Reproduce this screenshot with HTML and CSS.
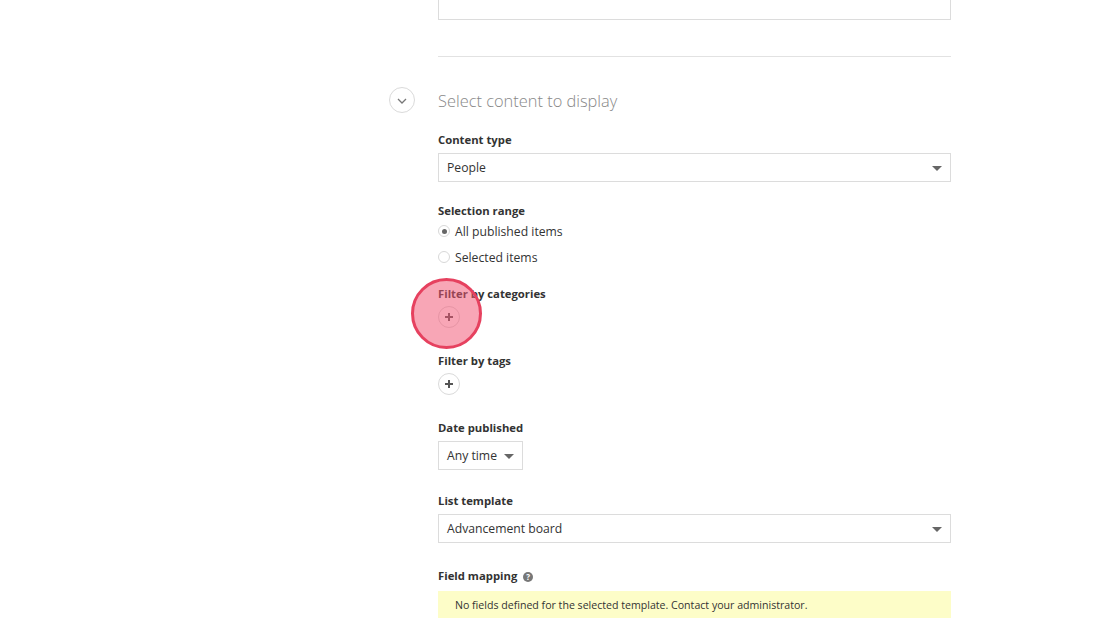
FILE: index.html
```html
<!DOCTYPE html>
<html lang="en">
<head>
<meta charset="utf-8">
<link rel="stylesheet" href="styles.css">
</head>
<body>
<div class="col">
  <div class="box top-box"></div>
  <hr class="divider">
  <div class="section-head">
    <span class="toggle"><svg width="10" height="6" viewBox="0 0 10 6"><path d="M1 1l4 4 4-4" fill="none" stroke="#777" stroke-width="1.3"/></svg></span>
    <h2>Select content to display</h2>
  </div>

  <div class="field first">
    <label class="lbl">Content type</label>
    <div class="box select full"><span>People</span><i class="caret"></i></div>
  </div>

  <div class="field tight">
    <label class="lbl">Selection range</label>
    <div class="radios">
      <div class="radio"><span class="dot on"></span>All published items</div>
      <div class="radio"><span class="dot"></span>Selected items</div>
    </div>
  </div>

  <div class="field after-radio">
    <label class="lbl">Filter by categories</label>
    <div class="plus-wrap">
      <span class="plus"><svg width="10" height="10" viewBox="0 0 10 10"><path d="M5 1v8M1 5h8" stroke="#555" stroke-width="2"/></svg></span>
      <span class="highlight"></span>
    </div>
  </div>

  <div class="field after-plus">
    <label class="lbl">Filter by tags</label>
    <div class="plus-wrap"><span class="plus"><svg width="10" height="10" viewBox="0 0 10 10"><path d="M5 1v8M1 5h8" stroke="#555" stroke-width="2"/></svg></span></div>
  </div>

  <div class="field after-plus">
    <label class="lbl">Date published</label>
    <div class="box select small"><span>Any time</span><i class="caret"></i></div>
  </div>

  <div class="field mid">
    <label class="lbl">List template</label>
    <div class="box select full"><span>Advancement board</span><i class="caret"></i></div>
  </div>

  <div class="field last">
    <label class="lbl">Field mapping <span class="help">?</span></label>
    <div class="notice">No fields defined for the selected template. Contact your administrator.</div>
  </div>
</div>
</body>
</html>
```

FILE: styles.css
```css
* { box-sizing: border-box; }
html, body { margin: 0; padding: 0; background: #fff; overflow: hidden; }
body { font-family: "Open Sans", "Liberation Sans", sans-serif; color: #333; }

.col { margin-left: 438px; width: 513px; }

.box { border: 1px solid #dcdcdc; background: #fff; }
.top-box { height: 40px; margin-top: -20px; }

.divider { border: 0; border-top: 1px solid #e2e2e2; margin: 36px 0 0; height: 0; }

.section-head { display: flex; align-items: center; margin-left: -49px; margin-top: 29px; height: 28px; }
.toggle { width: 26px; height: 26px; border: 1px solid #dadada; border-radius: 50%; display: flex; align-items: center; justify-content: center; margin-right: 23px; padding-top: 1px; }
.section-head h2 { margin: 0; font-weight: 300; font-size: 16.4px; color: #888; }

.field { margin-top: 24px; }
.field.first { margin-top: 18px; }
.field.tight { margin-top: 21px; }
.field.after-radio { margin-top: 21px; }
.field.after-plus { margin-top: 25px; }
.field.mid { margin-top: 23px; }
.field.last { margin-top: 25px; }
.lbl { display: block; font-weight: 700; font-size: 11.3px; color: #333; line-height: 16px; margin-bottom: 5px; }

.select { height: 29px; display: flex; align-items: center; justify-content: space-between; padding: 0 8px 0 8px; font-size: 12.2px; color: #333; }
.full { width: 513px; }
.small { width: 85px; }
.caret { width: 0; height: 0; border-left: 5px solid transparent; border-right: 5px solid transparent; border-top: 5px solid #666; margin-top: 2px; }

.radios { display: flex; flex-direction: column; gap: 10px; margin-top: -1px; }
.radio { display: flex; align-items: center; font-size: 12.2px; color: #333; height: 16px; }
.dot { width: 12px; height: 12px; border: 1px solid #d8d8d8; border-radius: 50%; margin-right: 5px; position: relative; background: #fff; }
.dot.on::after { content: ""; position: absolute; left: 3px; top: 3px; width: 5px; height: 5px; border-radius: 50%; background: #666; }

.plus-wrap { position: relative; height: 22px; margin-top: -1px; }
.plus { display: flex; width: 22px; height: 22px; border: 1px solid #dadada; border-radius: 50%; align-items: center; justify-content: center; background: #fff; }
.highlight { position: absolute; left: -27px; top: -28px; width: 71px; height: 71px; border-radius: 50%; border: 3px solid #e6415f; background: rgba(242, 85, 115, 0.52); }

.help { display: inline-flex; width: 10px; height: 10px; border-radius: 50%; background: #777; color: #fff; font-size: 8px; align-items: center; justify-content: center; margin-left: 3px; }

.notice { background: #fdfdc8; height: 27px; display: flex; align-items: center; padding-left: 17px; font-size: 10.6px; color: #333; margin-top: 7px; }
```
